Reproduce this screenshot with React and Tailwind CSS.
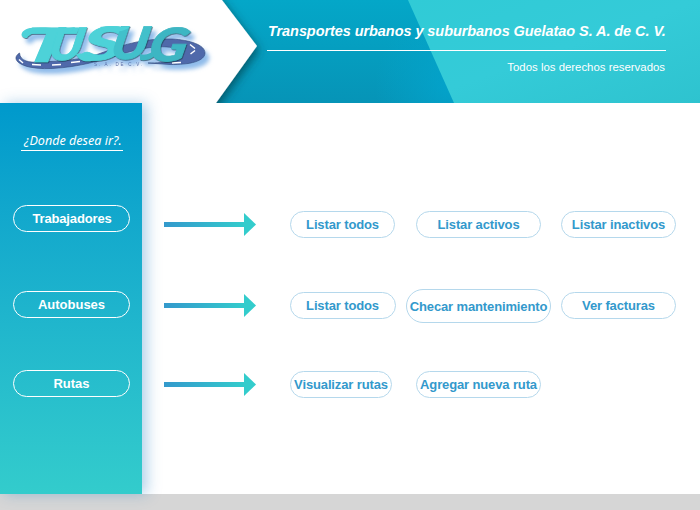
const letters = [
  { c: 'T', x: 20, y: 62, w: 49, size: 47 },
  { c: 'U', x: 47, y: 60, w: 34, size: 45 },
  { c: 'S', x: 79, y: 60, w: 42, size: 46 },
  { c: 'U', x: 109, y: 59, w: 37, size: 45 },
  { c: 'G', x: 147, y: 60.5, w: 38, size: 46 },
];

function Logo() {
  return (
    <svg width="222" height="103" viewBox="0 0 222 103" className="relative block" role="img" aria-label="TUSUG">
      <defs>
        <linearGradient id="letterFill" gradientUnits="userSpaceOnUse" x1="80" y1="25" x2="175" y2="60">
          <stop offset=".45" stopColor="#4dd2d8" />
          <stop offset=".6" stopColor="#3db6c3" />
        </linearGradient>
        <filter id="logoShadow" x="-10%" y="-20%" width="125%" height="160%">
          <feDropShadow dx="4" dy="5" stdDeviation="2.2" floodColor="#6aa5e3" floodOpacity=".75" />
        </filter>
        <filter id="letterEdge" filterUnits="userSpaceOnUse" x="0" y="0" width="222" height="103">
          <feDropShadow dx=".6" dy=".8" stdDeviation=".4" floodColor="#123e4d" floodOpacity=".85" />
        </filter>
      </defs>
      <g filter="url(#logoShadow)">
        <path d="M19.500 53C20 61 29 63 40 62C62 61 84 60 104 52C125 44 146 38 172 39C190 40 205 45 205 53C205 61 190 65 170 64.500L148 63C165 63 181 61 182 55C183 49 171 46 157 47C136 48 118 56 98 61C76 67 47 71 29 67C17 64 12 58 19.500 53Z" fill="#5069aa" stroke="#354c80" strokeWidth=".7" />
        <path d="M19 59.500l4 3.500M32 64.500l9 .5M52 65l9-.6M71 62.500l9-1M190 44.500l5 4M195 50.500l-4.500 3.500M181 62.500l-9 .5" stroke="#fff" strokeWidth="1.5" fill="none" />
        <g filter="url(#letterEdge)">
          {letters.map((l) => (
            <text key={l.x} transform={`translate(${l.x} ${l.y}) skewX(-11)`} fontSize={l.size} textLength={l.w} lengthAdjust="spacingAndGlyphs" fill={l.x > 140 ? '#3db6c3' : l.x > 100 ? '#42c0cb' : '#4dd2d8'} stroke={l.x > 140 ? '#3db6c3' : l.x > 100 ? '#42c0cb' : '#4dd2d8'} strokeWidth=".7" fontFamily="Lato, Liberation Sans, sans-serif" fontWeight="900" fontStyle="italic">{l.c}</text>
          ))}
          <path d="M30 28C20 30 19 38 27 38C29 34 36 32 44 32L66 32C71 32 74 29 75 27C62 30 45 26 30 28ZM100 27C110 25 121 28 130 26C127 32 114 32 104 31ZM76 54C82 52 92 56 96 60C86 63 79 61 76 54Z" fill="#4dd2d8" />
          <path d="M140 54C146 56 151 53 156 49C157 57 150 61 140 60Z" fill="#3db6c3" />
        </g>
        <text x="94" y="66" fontFamily="Liberation Sans, sans-serif" fontSize="4.500" textLength="48" fill="#5a6da5">S. A. DE C.V.</text>
      </g>
    </svg>
  );
}

function HeaderBackground() {
  return (
    <svg width="700" height="103" viewBox="0 0 700 103" className="absolute inset-0 block">
      <defs>
        <linearGradient id="deep" x1="0" y1="0" x2="0" y2="1">
          <stop stopColor="#04a7c8" />
          <stop offset="1" stopColor="#0694b7" />
        </linearGradient>
        <linearGradient id="light" x1="0" y1="0" x2="1" y2="1">
          <stop stopColor="#30cbd6" />
          <stop offset=".5" stopColor="#34cbd8" />
          <stop offset="1" stopColor="#2ec3cf" />
        </linearGradient>
        <radialGradient id="glow">
          <stop stopColor="#03a5ce" stopOpacity=".8" />
          <stop offset="1" stopColor="#03a5ce" stopOpacity="0" />
        </radialGradient>
        <filter id="edge" x="-10%" y="-20%" width="130%" height="140%">
          <feDropShadow dx="2" dy="4" stdDeviation="5" floodColor="#00343f" floodOpacity=".65" />
        </filter>
      </defs>
      <rect width="700" height="103" fill="url(#deep)" />
      <circle cx="450" cy="85" r="75" fill="url(#glow)" />
      <path d="M408 0H700V103H454Z" fill="url(#light)" />
      <path d="M-30-30H198L222 0L257 46L216 103L190 139H-30Z" fill="#fff" filter="url(#edge)" />
    </svg>
  );
}

function Arrow() {
  return (
    <svg width="92" height="23" viewBox="0 0 92 23" className="block shrink-0">
      <defs>
        <linearGradient id="arrowFill">
          <stop stopColor="#3399cc" />
          <stop offset="1" stopColor="#33cccc" />
        </linearGradient>
      </defs>
      <rect y="9" width="81" height="5" fill="url(#arrowFill)" />
      <path d="M80 0L92 11.500L80 23Z" fill="#33cccc" />
    </svg>
  );
}

function NavButton({ children, className }) {
  return (
    <button className={`block h-[27px] w-[117px] rounded-full border border-white text-center text-[13px] font-bold leading-[25px] text-white ${className}`}>
      {children}
    </button>
  );
}

function Action({ children, className = '' }) {
  return (
    <button className={`shrink-0 whitespace-nowrap rounded-full border border-[#b5d8ec] text-center text-[13px] font-bold tracking-[-0.13px] text-[#3399cc] ${className}`}>
      {children}
    </button>
  );
}

export default function App() {
  return (
    <div className="flex h-[510px] w-[700px] flex-col overflow-hidden bg-white font-['Liberation_Sans',sans-serif]">
      <header className="relative flex h-[103px] shrink-0 justify-between">
        <HeaderBackground />
        <Logo />
        <div className="relative mr-[34px] w-[399px] text-white">
          <h1 className="h-[51px] whitespace-nowrap border-b border-white pl-px pt-[21px] text-[14.5px] font-bold italic leading-5 tracking-[-0.07px]">
            Transportes urbanos y suburbanos Guelatao S. A. de C. V.
          </h1>
          <p className="pr-px pt-2 text-right text-[11.4px] leading-4">Todos los derechos reservados</p>
        </div>
      </header>

      <div className="flex h-[391px] shrink-0">
        <aside className="relative z-10 w-[142px] shrink-0 bg-linear-to-b from-[#0099cc] to-[#33cccc] pl-[13px] shadow-[5px_0_13px_rgba(51,134,196,0.38)]">
          <p className="ml-2 h-12 w-[102px] whitespace-nowrap border-b border-white pl-[3px] pt-[29px] font-['Noto_Sans',sans-serif] text-[12.6px] italic leading-[18px] text-white">
            ¿Donde desea ir?.
          </p>
          <NavButton className="mt-[54px] pl-px tracking-[-0.15px]">Trabajadores</NavButton>
          <NavButton className="mt-[59px]">Autobuses</NavButton>
          <NavButton className="mt-[52px]">Rutas</NavButton>
        </aside>

        <main className="flex-1 pl-[22px] pt-[105px]">
          <div className="flex h-[33px] items-center">
            <Arrow />
            <Action className="ml-[34px] h-[27px] w-[105px]">Listar todos</Action>
            <Action className="ml-[21px] h-[27px] w-[125px]">Listar activos</Action>
            <Action className="ml-[20px] h-[27px] w-[115px]">Listar inactivos</Action>
          </div>
          <div className="mt-[48px] flex h-[33px] items-center">
            <Arrow />
            <Action className="ml-[34px] h-[27px] w-[106px] pr-px">Listar todos</Action>
            <Action className="ml-[10px] mt-px h-[34px] w-[145px] pt-0.5">Checar mantenimiento</Action>
            <Action className="ml-[10px] h-[27px] w-[115px]">Ver facturas</Action>
          </div>
          <div className="mt-[46px] flex h-[33px] items-center">
            <Arrow />
            <Action className="ml-[34px] h-[27px] w-[102px]">Visualizar rutas</Action>
            <Action className="ml-[24px] h-[27px] w-[125px]">Agregar nueva ruta</Action>
          </div>
        </main>
      </div>

      <footer className="flex-1 bg-[#d6d6d6]" />
    </div>
  );
}
